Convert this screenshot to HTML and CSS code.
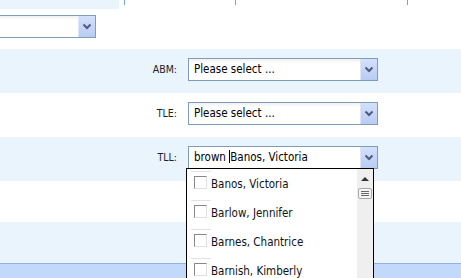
FILE: index.html
```html
<!DOCTYPE html>
<html lang="en">
<head>
  <meta charset="UTF-8" />
  <title>Assignment</title>
  <link rel="stylesheet" href="styles.css">
</head>
<body>

<div class="top-strip">
  <div class="top-cell"></div>
  <div class="tick t1"></div>
  <div class="tick t2"></div>
  <div class="tick t3"></div>
</div>

<div class="form-row first">
  <div class="combo short">
    <div class="combo-text"></div>
    <div class="combo-btn"><svg width="10" height="7" viewBox="0 0 10 7"><path d="M1.5 1.5 L5 5 L8.5 1.5" fill="none" stroke="#4a5c80" stroke-width="2"/></svg></div>
  </div>
</div>

<div class="form-row alt">
  <label class="field-label">ABM:</label>
  <div class="combo">
    <div class="combo-text">Please select ...</div>
    <div class="combo-btn"><svg width="10" height="7" viewBox="0 0 10 7"><path d="M1.5 1.5 L5 5 L8.5 1.5" fill="none" stroke="#4a5c80" stroke-width="2"/></svg></div>
  </div>
</div>

<div class="form-row">
  <label class="field-label">TLE:</label>
  <div class="combo">
    <div class="combo-text">Please select ...</div>
    <div class="combo-btn"><svg width="10" height="7" viewBox="0 0 10 7"><path d="M1.5 1.5 L5 5 L8.5 1.5" fill="none" stroke="#4a5c80" stroke-width="2"/></svg></div>
  </div>
</div>

<div class="form-row alt">
  <label class="field-label">TLL:</label>
  <div class="combo open">
    <div class="combo-text">brown <span class="caret"></span>Banos, Victoria</div>
    <div class="combo-btn"><svg width="10" height="7" viewBox="0 0 10 7"><path d="M1.5 1.5 L5 5 L8.5 1.5" fill="none" stroke="#4a5c80" stroke-width="2"/></svg></div>

    <div class="dropdown">
      <ul class="options">
        <li><span class="check"></span>Banos, Victoria</li>
        <li><span class="check"></span>Barlow, Jennifer</li>
        <li><span class="check"></span>Barnes, Chantrice</li>
        <li><span class="check"></span>Barnish, Kimberly</li>
      </ul>
      <div class="scrollbar">
        <div class="arrow-up"></div>
        <div class="thumb"><span></span><span></span><span></span></div>
      </div>
    </div>
  </div>
</div>

<div class="form-row short-row"></div>
<div class="form-row alt short-row"></div>

<div class="bottom-bar"></div>

</body>
</html>
```

FILE: styles.css
```css
* {
  margin: 0;
  padding: 0;
  box-sizing: border-box;
}

body {
  width: 461px;
  height: 278px;
  overflow: hidden;
  background: #ffffff;
  font-family: "DejaVu Sans Condensed", "DejaVu Sans", sans-serif;
  font-size: 11.5px;
  color: #000;
}

/* header strip */
.top-strip {
  display: flex;
  height: 9px;
}

.top-cell {
  width: 119px;
  background: #eaf4fd;
}

.tick {
  width: 1px;
  height: 5px;
  background: #7b9fd8;
}

.t1 { margin-left: 5px; }
.t2 { margin-left: 110px; }
.t3 { margin-left: 171px; }

/* form rows */
.form-row {
  display: flex;
  align-items: flex-start;
  height: 44px;
  padding-top: 9px;
}

.form-row.first {
  height: 40px;
  padding-top: 6px;
}

.form-row.alt {
  background: #eaf4fd;
}

.form-row.short-row {
  height: 41px;
}

.field-label {
  width: 178px;
  padding-right: 1px;
  text-align: right;
  font-size: 10.5px;
  color: #222;
  line-height: 23px;
  margin-right: 10px;
}

/* combo box */
.combo {
  position: relative;
  display: flex;
  width: 190px;
  height: 23px;
  border: 1px solid #7f9db9;
  background: #fff;
}

.combo.short {
  width: 121px;
  margin-left: -25px;
}

.combo-text {
  flex: 1;
  padding-left: 5px;
  line-height: 20px;
  white-space: nowrap;
  background: linear-gradient(#f0f0f0, #ffffff 4px);
}

.combo.open .combo-text {
  background: #fff;
}

.caret {
  display: inline-block;
  width: 1px;
  height: 13px;
  background: #000;
  vertical-align: -2px;
}

.combo-btn {
  width: 17px;
  display: flex;
  align-items: center;
  justify-content: center;
  border-left: 1px solid #dce6fb;
  background: linear-gradient(#d4e0fb, #b9cbf3);
}

/* dropdown list */
.dropdown {
  position: absolute;
  left: -3px;
  top: 21px;
  width: 188px;
  height: 112px;
  overflow: hidden;
  border: 1px solid #000;
  border-bottom: none;
  background: #fff;
  display: flex;
}

.options {
  flex: 1;
  list-style: none;
}

.options li {
  position: relative;
  height: 29px;
  padding: 7px 0 0 24px;
  line-height: 16px;
  color: #111;
}

.options li::before {
  content: "";
  position: absolute;
  left: 4px;
  top: 2px;
  width: 20px;
  height: 1px;
  background: #e2e2e2;
}

.check {
  position: absolute;
  left: 7px;
  top: 7px;
  width: 13px;
  height: 13px;
  border: 1px solid #888;
  border-right-color: #e0e0e0;
  border-bottom-color: #e0e0e0;
  background: #fff;
}

.scrollbar {
  width: 16px;
  background: #efefef;
  display: flex;
  flex-direction: column;
  align-items: center;
}

.arrow-up {
  margin-top: 8px;
  width: 0;
  height: 0;
  border-left: 4px solid transparent;
  border-right: 4px solid transparent;
  border-bottom: 4px solid #333;
}

.thumb {
  margin-top: 7px;
  width: 14px;
  height: 11px;
  border: 1px solid #a8a8a8;
  border-radius: 2px;
  background: #f6f6f6;
  display: flex;
  flex-direction: column;
  justify-content: center;
  align-items: center;
  gap: 1px;
}

.thumb span {
  width: 8px;
  height: 1px;
  background: #666;
}

.bottom-bar {
  height: 16px;
  border-top: 1px solid #8fb0e0;
  background: #c2d9fb;
}
```
